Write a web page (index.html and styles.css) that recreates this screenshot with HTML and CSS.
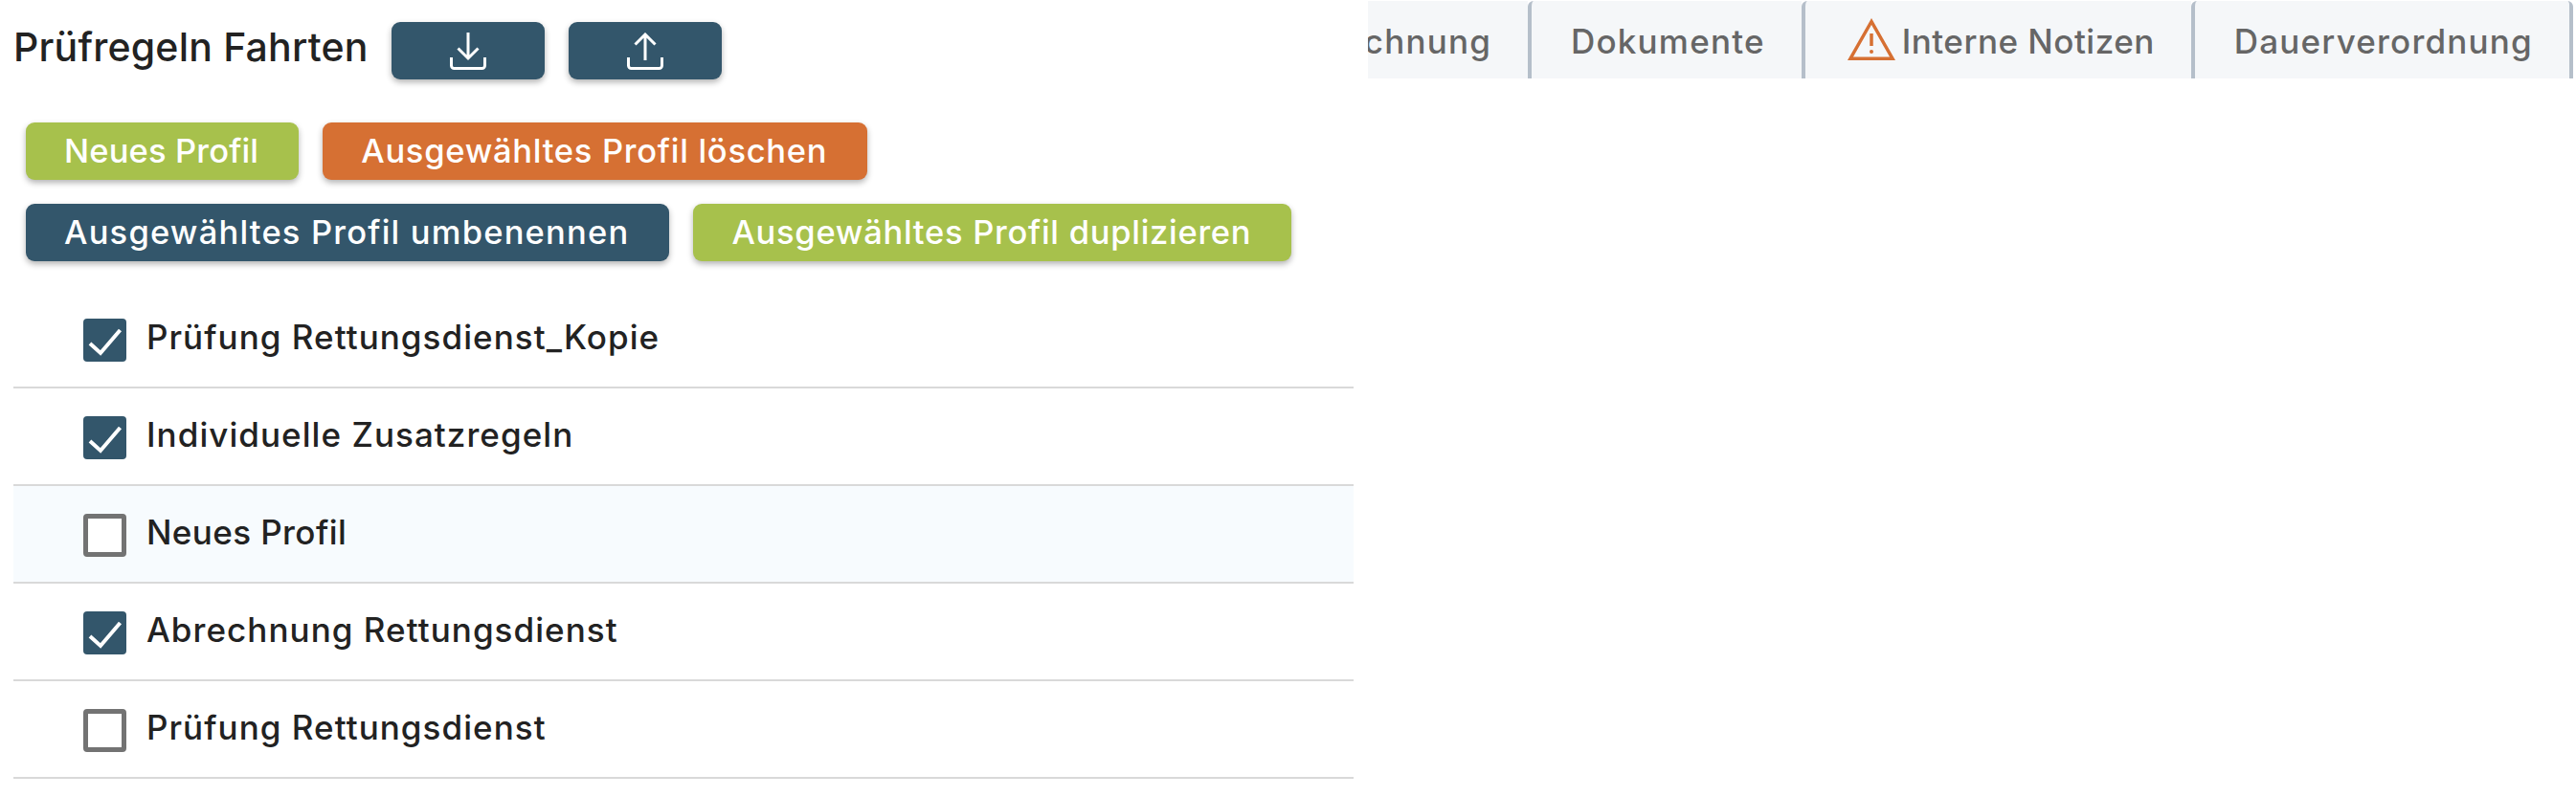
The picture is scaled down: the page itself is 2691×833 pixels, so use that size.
FILE: index.html
```html
<!DOCTYPE html>
<html lang="de">

<head>
    <meta charset="UTF-8" />
    <meta name="viewport" content="width=device-width, initial-scale=1.0" />
    <title>Prüfregeln Fahrten</title>
    <link rel="stylesheet" href="styles.css">
</head>

<body>
    <div class="page">
        <div class="panel">
            <div class="panel_head">
                <h3 class="panel_title">Prüfregeln Fahrten</h3>
                <button class="btn btn_navy btn_icon">
                    <svg width="38" height="39" viewBox="0 0 38 39" fill="none" stroke="#fff" stroke-width="3">
                        <path d="M1.5 26v8.5a3 3 0 0 0 3 3h29a3 3 0 0 0 3-3V26" />
                        <path d="M19 0v27M8.5 16.500 19 27l10.500-10.500" />
                    </svg>
                </button>
                <button class="btn btn_navy btn_icon">
                    <svg width="38" height="39" viewBox="0 0 38 39" fill="none" stroke="#fff" stroke-width="3">
                        <path d="M1.500 26v8.500a3 3 0 0 0 3 3h29a3 3 0 0 0 3-3V26" />
                        <path d="M19 29V2M8.500 12.500 19 2l10.500 10.500" />
                    </svg>
                </button>
            </div>
            <div class="actions">
                <button class="btn btn_green btn_short">Neues Profil</button>
                <button class="btn btn_orange">Ausgewähltes Profil löschen</button>
            </div>
            <div class="actions">
                <button class="btn btn_navy btn_wide">Ausgewähltes Profil umbenennen</button>
                <button class="btn btn_green">Ausgewähltes Profil duplizieren</button>
            </div>
            <div class="profile_list">
                <div class="profile_row">
                    <span class="check check_on">
                        <svg width="45" height="45" viewBox="0 0 45 45" fill="none" stroke="#fff" stroke-width="4">
                            <path d="M7 26l11 10L38.500 12" />
                        </svg>
                    </span>
                    <span class="profile_name">Prüfung Rettungsdienst_Kopie</span>
                </div>
                <div class="profile_row">
                    <span class="check check_on">
                        <svg width="45" height="45" viewBox="0 0 45 45" fill="none" stroke="#fff" stroke-width="4">
                            <path d="M7 26l11 10L38.500 12" />
                        </svg>
                    </span>
                    <span class="profile_name">Individuelle Zusatzregeln</span>
                </div>
                <div class="profile_row row_active">
                    <span class="check"></span>
                    <span class="profile_name">Neues Profil</span>
                </div>
                <div class="profile_row">
                    <span class="check check_on">
                        <svg width="45" height="45" viewBox="0 0 45 45" fill="none" stroke="#fff" stroke-width="4">
                            <path d="M7 26l11 10L38.500 12" />
                        </svg>
                    </span>
                    <span class="profile_name">Abrechnung Rettungsdienst</span>
                </div>
                <div class="profile_row">
                    <span class="check"></span>
                    <span class="profile_name">Prüfung Rettungsdienst</span>
                </div>
            </div>
        </div>
        <div class="tabs">
            <a href="#" class="tab">Abrechnung</a>
            <a href="#" class="tab">Dokumente</a>
            <a href="#" class="tab tab_notes">
                <svg class="tab_warn" width="50" height="44" viewBox="0 0 50 44" fill="none" stroke="#d67033" stroke-width="3.500">
                    <path d="M25 3.500 3 42.200h44z" />
                    <path d="M25 16v13" />
                    <circle cx="25" cy="35" r="2" fill="#d67033" stroke="none" />
                </svg>
                Interne Notizen
            </a>
            <a href="#" class="tab">Dauerverordnung</a>
        </div>
    </div>
</body>

</html>
```

FILE: styles.css
```css
* {
    box-sizing: border-box;
}

body {
    margin: 0;
    background: #fff;
    font-family: Inter, "Noto Sans", sans-serif;
    color: #222;
}

.page {
    display: flex;
    align-items: flex-start;
}

.panel {
    width: 1429px;
    flex-shrink: 0;
    padding: 23px 15px 0 14px;
}

.panel_head {
    display: flex;
    align-items: center;
    gap: 25px;
    margin-bottom: 45px;
}

.panel_title {
    width: 370px;
    margin: 0;
    padding-bottom: 8px;
    font-size: 41px;
    font-weight: 450;
    letter-spacing: 0.2px;
    white-space: nowrap;
}

.btn {
    height: 60px;
    padding: 0 42px 2px 40px;
    border: none;
    border-radius: 9px;
    color: #fff;
    font-family: inherit;
    font-size: 34.5px;
    font-weight: 500;
    letter-spacing: 0.72px;
    white-space: nowrap;
    box-shadow: 0 3px 6px rgba(0, 0, 0, 0.3);
}

.btn_short {
    letter-spacing: 0.15px;
}

.btn_wide {
    letter-spacing: 1.2px;
}

.btn_navy {
    background: #33566b;
}

.btn_green {
    background: #a7c14c;
}

.btn_orange {
    background: #d67033;
}

.btn_icon {
    display: flex;
    align-items: center;
    justify-content: center;
    width: 160px;
    padding: 0;
}

.actions {
    display: flex;
    gap: 25px;
    margin: 0 0 25px 13px;
}

.profile_list {
    margin-top: 31px;
}

.profile_row {
    display: flex;
    align-items: center;
    gap: 21px;
    height: 102px;
    padding-left: 73px;
    border-bottom: 2px solid #d9d9d9;
    font-size: 35px;
    font-weight: 450;
    letter-spacing: 1.05px;
}

.profile_name {
    padding-bottom: 5px;
}

.row_active {
    background: #f7fbfe;
    letter-spacing: 0.4px;
}

.check {
    width: 45px;
    height: 45px;
    flex-shrink: 0;
    margin-top: 3px;
    border: 5px solid #737373;
    border-radius: 4px;
    background: #fff;
}

.check_on {
    border: none;
    background: #33566b;
}

.check svg {
    display: block;
}

.tabs {
    display: flex;
    justify-content: flex-end;
    overflow: hidden;
    width: 1259px;
    height: 81px;
    margin-top: 1px;
    border-right: 4px solid #b5bfca;
    border-top-right-radius: 6px;
}

.tab {
    display: flex;
    align-items: center;
    flex-shrink: 0;
    height: 100%;
    padding: 3px 38px 0 41px;
    border-left: 4px solid #b5bfca;
    border-top-left-radius: 6px;
    background: #f5f7f9;
    color: #666;
    font-size: 35px;
    font-weight: 450;
    letter-spacing: 1.2px;
    text-decoration: none;
    white-space: nowrap;
}

.tab_notes {
    letter-spacing: 0.5px;
}

.tab_warn {
    margin: -5px 7px 0 3px;
}
```
